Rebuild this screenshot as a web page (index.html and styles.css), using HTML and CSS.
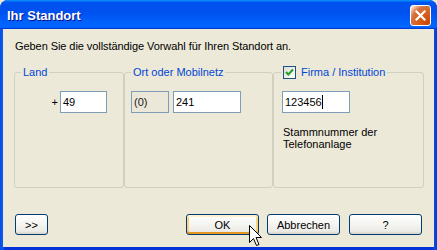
FILE: index.html
```html
<!DOCTYPE html>
<html lang="de">
<head>
    <meta charset="UTF-8">
    <meta name="viewport" content="width=device-width, initial-scale=1.0">
    <title>Ihr Standort</title>
    <link rel="stylesheet" href="styles.css">
</head>
<body>
    <div class="window">
        <div class="title-bar">
            <span class="title">Ihr Standort</span>
            <button class="close-btn" aria-label="Schließen">
                <svg width="11" height="11" viewBox="0 0 11 11">
                    <path d="M1.5 1.5 L9.5 9.5 M9.5 1.5 L1.5 9.5" stroke="#fff" stroke-width="2.2" stroke-linecap="square"/>
                </svg>
            </button>
        </div>

        <div class="client">
            <p class="intro">Geben Sie die vollständige Vorwahl für Ihren Standort an.</p>

            <div class="groups">
                <fieldset class="group group-land">
                    <legend>Land</legend>
                    <div class="row row-land">
                        <span class="plus">+</span>
                        <div class="edit edit-country">49</div>
                    </div>
                </fieldset>

                <fieldset class="group group-ort">
                    <legend>Ort oder Mobilnetz</legend>
                    <div class="row">
                        <div class="edit edit-prefix readonly">(0)</div>
                        <div class="edit edit-area">241</div>
                    </div>
                </fieldset>

                <fieldset class="group group-firma">
                    <legend>
                        <span class="checkbox">
                            <svg width="11" height="11" viewBox="0 0 11 11">
                                <path d="M2 5 L4.3 7.5 L9 2.5" fill="none" stroke="#21a121" stroke-width="2"/>
                            </svg>
                        </span>
                        Firma / Institution
                    </legend>
                    <div class="row">
                        <div class="edit edit-number">123456<span class="caret"></span></div>
                    </div>
                    <p class="hint">Stammnummer der<br>Telefonanlage</p>
                </fieldset>
            </div>

            <div class="footer">
                <button class="btn btn-more">&gt;&gt;</button>
                <div class="actions">
                    <button class="btn btn-default">OK</button>
                    <button class="btn">Abbrechen</button>
                    <button class="btn btn-help">?</button>
                </div>
            </div>
        </div>

        <!-- mouse pointer resting on the OK button -->
        <svg class="pointer" width="14" height="22" viewBox="0 0 14 22">
            <path d="M0.5 0.5 L0.5 17.5 L4.5 13.5 L7.5 20.5 L10 19.5 L7 12.5 L12.5 12.5 Z" fill="#fff" stroke="#000" stroke-width="1"/>
        </svg>
    </div>
</body>
</html>
```

FILE: styles.css
```css
/* General page styling */
body {
    margin: 0;
    padding: 0;
    background-color: #ece9d8;
    font-family: "Liberation Sans", Arial, sans-serif;
    font-size: 11px;
}

/* Window frame */
.window {
    position: relative;
    width: 437px;
    height: 250px;
    box-sizing: border-box;
    padding: 0 3px 3px;
    background: linear-gradient(90deg, #0a4ee6 0, #0a5cf0 3px, #0831d9 4px, #0831d9 433px, #0a4ee6 434px, #0639c8 437px);
    border-radius: 8px 8px 0 0;
    display: flex;
    flex-direction: column;
}

.title-bar {
    height: 29px;
    margin: 0 -3px;
    padding: 0 6px 0 7px;
    border-radius: 8px 8px 0 0;
    background: linear-gradient(180deg, #0997ff, #0053ee 8%, #0050ee 40%, #0066ff 88%, #0066ff 93%, #005bff 95%, #003dd7 96%, #003dd7);
    display: flex;
    justify-content: space-between;
    align-items: center;
}

.title {
    color: white;
    font-weight: bold;
    font-size: 13px;
    text-shadow: 1px 1px #0f1089;
    margin-top: 1px;
}

.close-btn {
    width: 21px;
    height: 21px;
    padding: 0;
    border: 1px solid white;
    border-radius: 3px;
    background: radial-gradient(circle at 90% 90%, #cc4600 0, #dc6527 55%, #cd7546 70%, #ffccb2 90%, #fff 100%);
    display: flex;
    justify-content: center;
    align-items: center;
    margin-top: 1px;
}

/* Dialog contents */
.client {
    flex: 1;
    background-color: #ece9d8;
    padding: 11px 10px 12px 11px;
    display: flex;
    flex-direction: column;
}

.intro {
    margin: 0 0 13px 1px;
    line-height: 13px;
    letter-spacing: -0.07px;
    color: #000;
}

.groups {
    display: flex;
}

/* Group boxes */
.group {
    margin: 0;
    padding: 0 0 0 6px;
    height: 122px;
    box-sizing: border-box;
    border: 1px solid #d0d0bf;
    border-radius: 3px;
    min-width: 0;
}

.group legend {
    padding: 0 2px;
    line-height: 13px;
    color: #0046d5;
    display: flex;
    align-items: center;
    gap: 5px;
}

.group-land {
    width: 110px;
}

.group-ort {
    width: 149px;
}

.group-firma {
    width: 151px;
    padding-left: 7px;
}

.row {
    margin-top: 12px;
    display: flex;
    align-items: center;
    gap: 4px;
}

.row-land {
    justify-content: flex-end;
    padding-right: 16px;
    gap: 2px;
}

/* Edit fields */
.edit {
    height: 22px;
    box-sizing: border-box;
    border: 1px solid #7f9db9;
    background-color: white;
    padding-left: 2px;
    line-height: 20px;
    color: #000;
}

.edit.readonly {
    background-color: #ebe8d9;
    color: #1a1a1a;
}

.edit-country {
    width: 47px;
}

.edit-prefix {
    width: 38px;
}

.edit-area {
    width: 68px;
}

.edit-number {
    width: 68px;
    margin-left: 1px;
}

.caret {
    display: inline-block;
    width: 1px;
    height: 14px;
    background-color: #000;
    vertical-align: -3px;
}

.checkbox {
    width: 13px;
    height: 13px;
    box-sizing: border-box;
    border: 1px solid #1c5180;
    background: linear-gradient(135deg, #dcdcd7, #ffffff);
    display: flex;
    justify-content: center;
    align-items: center;
}

.hint {
    margin: 13px 0 0 2px;
    line-height: 12px;
    color: #000;
}

/* Button row */
.footer {
    margin-top: 26px;
    padding-right: 2px;
    display: flex;
    justify-content: space-between;
}

.actions {
    display: flex;
    gap: 8px;
}

.btn {
    height: 21px;
    width: 73px;
    padding: 0;
    border: 1px solid #003c74;
    border-radius: 3px;
    background: linear-gradient(180deg, #ffffff 0%, #f6f6f3 40%, #ecebe6 85%, #d6d0c5 100%);
    font-family: "Liberation Sans", Arial, sans-serif;
    font-size: 11px;
    color: #000;
}

.btn-more {
    width: 33px;
    margin-left: 1px;
}

.btn-help {
    margin-left: 1px;
}

.btn-default {
    box-shadow: inset 0 2px 0 #fff0cf, inset 0 -2px 0 #e5971f, inset 2px 0 0 #fbd17a, inset -2px 0 0 #fbd17a;
}

.pointer {
    position: absolute;
    left: 249px;
    top: 225px;
}
```
